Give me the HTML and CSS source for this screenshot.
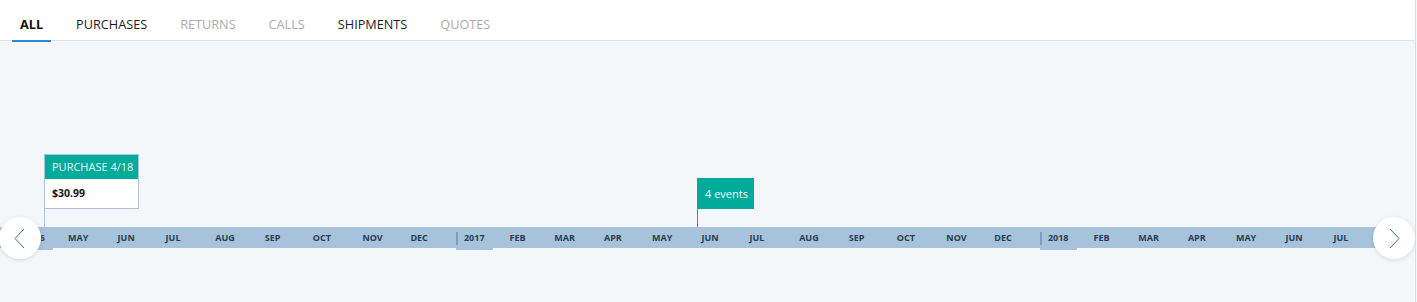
FILE: index.html
```html
<!DOCTYPE html>
<html>
  <head>
    <meta charset="utf-8" />
    <title>Timeline</title>
    <link rel="stylesheet" href="styles.css">
  </head>
  <body>
    <div class="app">
      <nav class="tabs">
        <div class="tab active">ALL</div>
        <div class="tab">PURCHASES</div>
        <div class="tab muted">RETURNS</div>
        <div class="tab muted">CALLS</div>
        <div class="tab">SHIPMENTS</div>
        <div class="tab muted">QUOTES</div>
      </nav>

      <section class="timeline">
        <div class="bar">
          <div class="month m30 year"><span>2016</span></div>
          <div class="month m31">MAY</div>
          <div class="month m30">JUN</div>
          <div class="month m31">JUL</div>
          <div class="month m31">AUG</div>
          <div class="month m30">SEP</div>
          <div class="month m31">OCT</div>
          <div class="month m30">NOV</div>
          <div class="month m31">DEC</div>
          <div class="month m31 year"><span>2017</span></div>
          <div class="month m28">FEB</div>
          <div class="month m31">MAR</div>
          <div class="month m30">APR</div>
          <div class="month m31">MAY</div>
          <div class="month m30">JUN</div>
          <div class="month m31">JUL</div>
          <div class="month m31">AUG</div>
          <div class="month m30">SEP</div>
          <div class="month m31">OCT</div>
          <div class="month m30">NOV</div>
          <div class="month m31">DEC</div>
          <div class="month m31 year"><span>2018</span></div>
          <div class="month m28">FEB</div>
          <div class="month m31">MAR</div>
          <div class="month m30">APR</div>
          <div class="month m31">MAY</div>
          <div class="month m30">JUN</div>
          <div class="month m31">JUL</div>
          <div class="month m31"></div>
        </div>

        <!-- markers sit at their date on the track -->
        <div class="marker purchase" style="left: 44px; top: 113px;">
          <div class="card">
            <div class="card-head">PURCHASE 4/18</div>
            <div class="card-body">$30.99</div>
          </div>
          <div class="stem"></div>
        </div>

        <div class="marker events" style="left: 697px; top: 137px;">
          <div class="flag">4 events</div>
          <div class="stem"></div>
        </div>

        <button class="nav prev" type="button">
          <svg width="42" height="42" viewBox="0 0 42 42">
            <polyline points="25,12 16,21.5 25,31" fill="none" stroke="#2f6fae" stroke-width="1" />
          </svg>
        </button>
        <button class="nav next" type="button">
          <svg width="42" height="42" viewBox="0 0 42 42">
            <polyline points="17,12 26,21.5 17,31" fill="none" stroke="#2f6fae" stroke-width="1" />
          </svg>
        </button>
      </section>
    </div>
  </body>
</html>
```

FILE: styles.css
```css
html,
body {
  margin: 0;
  padding: 0;
  background: #f4f7fa;
  font-family: "Open Sans", "Liberation Sans", sans-serif;
}

.app {
  width: 1415px;
  height: 302px;
  border-right: 1px solid #d9dcdf;
  background: #f4f7fa;
}

/* tabs */
.tabs {
  display: flex;
  align-items: flex-start;
  gap: 17px;
  height: 40px;
  padding-left: 12px;
  background: #ffffff;
  border-bottom: 1px solid #d8e5f1;
}

.tab {
  height: 24px;
  padding: 16px 8px 0;
  line-height: 17px;
  font-size: 12.7px;
  color: #1c1c1c;
  border-bottom: 1px solid transparent;
  margin-bottom: -1px;
  box-sizing: content-box;
}

.tab.active {
  font-weight: 700;
  color: #111111;
  border-bottom: 1px solid #2b8ad6;
  box-shadow: 0 1px 0 #2b8ad6;
}

.tab.muted {
  color: #ababab;
}

/* timeline */
.timeline {
  position: relative;
  height: 261px;
  padding-top: 186px;
  box-sizing: border-box;
  overflow: hidden;
}

.bar {
  display: flex;
  height: 21px;
  margin-right: 21px;
  padding-left: 16px;
  background: #a6c3db;
  overflow-x: clip;
  overflow-y: visible;
}

.month {
  flex: none;
  box-sizing: border-box;
  padding-left: 4px;
  font-size: 9px;
  font-weight: 700;
  line-height: 21px;
  color: #2a3b52;
}

.m31 { width: 49.6px; }
.m30 { width: 48px; }
.m28 { width: 44.8px; }

.month.year {
  padding-left: 0;
}

.month.year span {
  display: inline-block;
  height: 22px;
  padding: 0 8px 0 8px;
  line-height: 20px;
  background: linear-gradient(#7d9fbd, #7d9fbd) left 4px / 2px 13px no-repeat, #a6c3db;
}

/* markers */
.marker {
  position: absolute;
  display: flex;
  flex-direction: column;
}

.stem {
  width: 1px;
  height: 18px;
}

.purchase .stem {
  background: #a9c6dd;
}

.card {
  width: 93px;
  border: 1px solid #a9c6dd;
  background: #ffffff;
}

.card-head {
  height: 24px;
  padding-left: 7px;
  line-height: 24px;
  font-size: 11px;
  color: #eaf8f5;
  background: #00ab9b;
}

.card-body {
  height: 29px;
  padding-left: 7px;
  line-height: 29px;
  font-size: 10.5px;
  font-weight: 700;
  color: #141414;
}

.flag {
  width: 57px;
  height: 31px;
  box-sizing: border-box;
  padding-left: 8px;
  line-height: 31px;
  font-size: 11px;
  color: #f2fbfa;
  background: #00ab9b;
}

.events .stem {
  background: #00ab9b;
}

/* arrows over the track ends */
.nav {
  position: absolute;
  top: 176px;
  width: 42px;
  height: 42px;
  padding: 0;
  border: 0;
  border-radius: 50%;
  background: #ffffff;
  box-shadow: 0 1px 4px rgba(0, 0, 0, 0.13);
  cursor: pointer;
}

.nav svg {
  display: block;
}

.prev {
  left: -1px;
}

.next {
  left: 1373px;
}
```
